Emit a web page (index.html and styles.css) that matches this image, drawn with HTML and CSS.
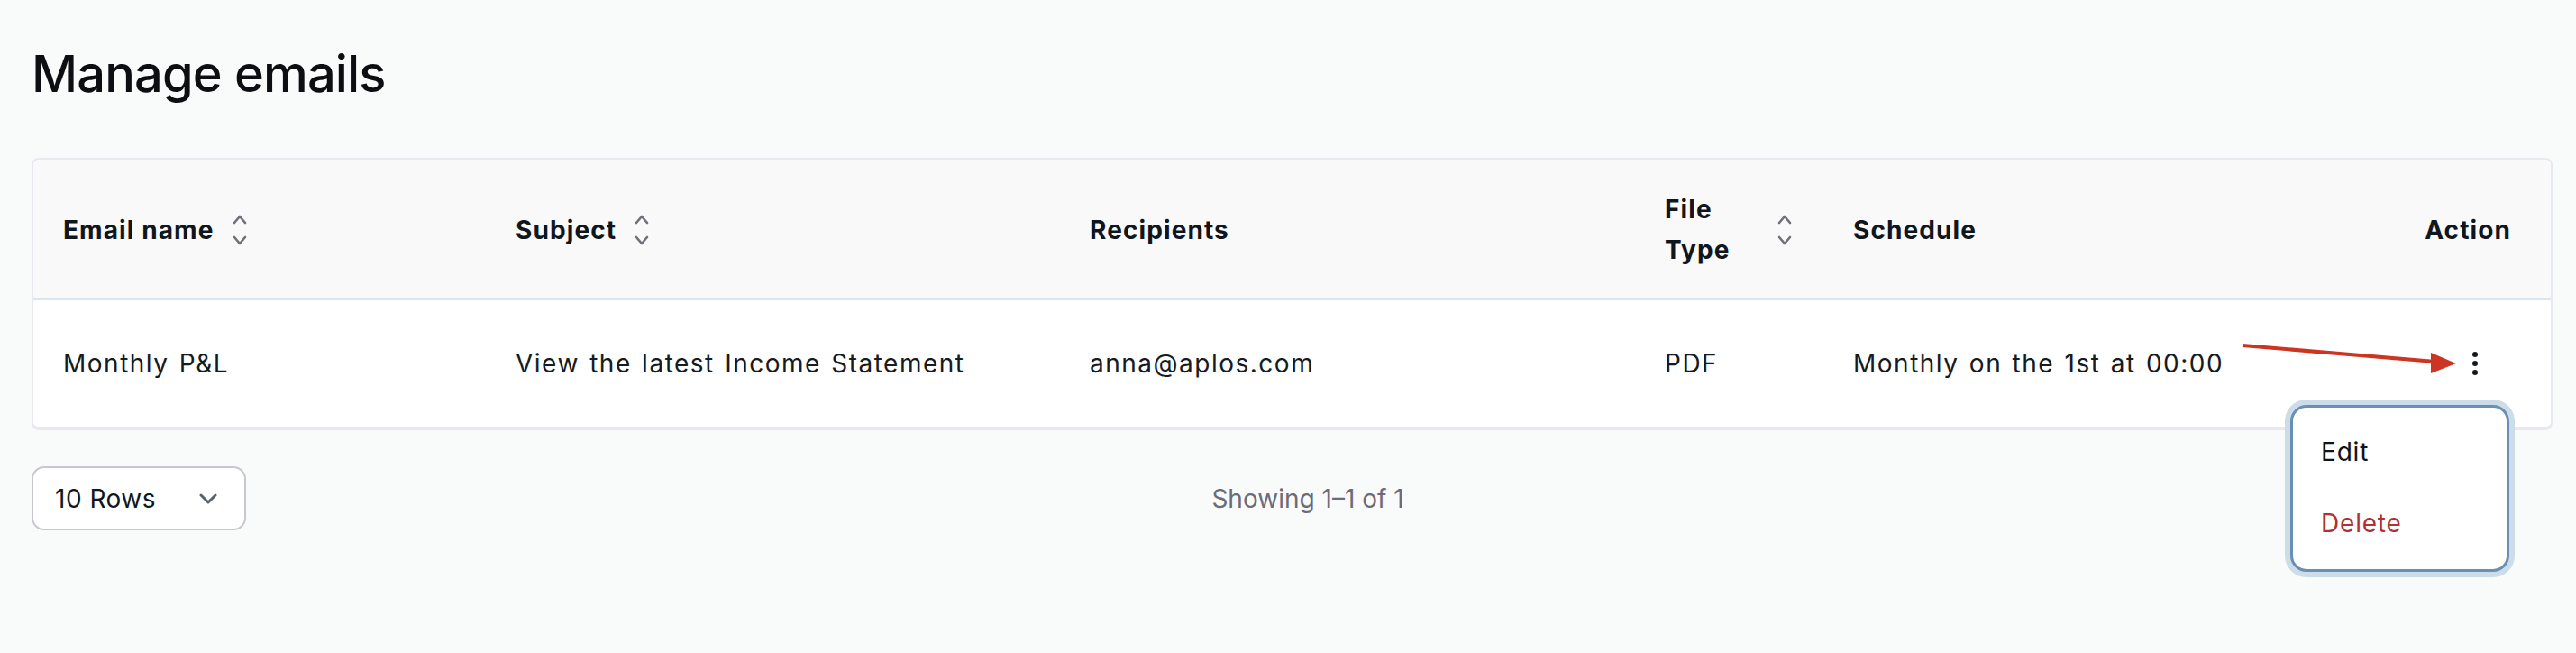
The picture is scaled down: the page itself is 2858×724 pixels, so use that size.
FILE: index.html
```html
<!DOCTYPE html>
<html lang="en">
<head>
<meta charset="utf-8">
<title>Manage emails</title>
<link rel="stylesheet" href="styles.css">
</head>
<body>
<div class="page">
  <h1 class="title">Manage emails</h1>

  <div class="card">
    <div class="grid">
      <div class="th"><span>Email name</span><svg class="sort" viewBox="0 0 16 36"><path d="M2 10 L8 3 L14 10"/><path d="M2 26 L8 33 L14 26"/></svg></div>
      <div class="th"><span>Subject</span><svg class="sort" viewBox="0 0 16 36"><path d="M2 10 L8 3 L14 10"/><path d="M2 26 L8 33 L14 26"/></svg></div>
      <div class="th"><span>Recipients</span></div>
      <div class="th"><span class="wrap">File Type</span><svg class="sort" viewBox="0 0 16 36"><path d="M2 10 L8 3 L14 10"/><path d="M2 26 L8 33 L14 26"/></svg></div>
      <div class="th"><span>Schedule</span></div>
      <div class="th th-action"><span>Action</span></div>

      <div class="td">Monthly P&amp;L</div>
      <div class="td">View the latest Income Statement</div>
      <div class="td">anna@aplos.com</div>
      <div class="td">PDF</div>
      <div class="td">Monthly on the 1st at 00:00</div>
      <div class="td td-action">
        <button class="kebab" aria-label="Actions">
          <svg viewBox="0 0 8 28"><circle cx="4" cy="4" r="3"/><circle cx="4" cy="14" r="3"/><circle cx="4" cy="24" r="3"/></svg>
        </button>
      </div>
    </div>
  </div>

  <div class="toolbar">
    <div class="select">
      <span>10 Rows</span>
      <svg class="chev" viewBox="0 0 20 12"><path d="M2 2 L10 10 L18 2"/></svg>
    </div>
    <div class="showing">Showing 1–1 of 1</div>
    <div class="spacer"></div>
  </div>

  <svg class="annot" viewBox="0 0 260 50" aria-hidden="true">
    <line x1="8" y1="8" x2="222" y2="26"/>
    <polygon points="245,28 217,16 217,39"/>
  </svg>

  <div class="menu">
    <div class="item">Edit</div>
    <div class="item danger">Delete</div>
  </div>
</div>
</body>
</html>
```

FILE: styles.css
```css
* { box-sizing: border-box; }
html, body { margin: 0; padding: 0; }
body {
  background: #f9fafa;
  font-family: Inter, "Open Sans", "Liberation Sans", sans-serif;
  color: #12181f;
  font-size: 28px;
}
.page {
  position: relative;
  padding: 46px 26px 0 35px;
  min-height: 724px;
}
.title {
  margin: 0;
  font-size: 56px;
  line-height: 72px;
  font-weight: 500;
  color: #0c0f12;
  letter-spacing: -0.85px;
}
.card {
  margin-top: 57px;
  border: 2px solid #e9e8ee;
  border-bottom-width: 4px;
  border-radius: 8px;
  background: #ffffff;
  overflow: hidden;
}
.grid {
  display: grid;
  grid-template-columns: 502px 637px 638px 209px 1fr 300px;
}
.th {
  height: 156px;
  background: #f9f9fa;
  border-bottom: 3px solid #dce6ef;
  display: flex;
  align-items: center;
  gap: 20px;
  padding-left: 33px;
  padding-top: 3px;
  font-weight: 700;
  line-height: 1.6;
  letter-spacing: 1.1px;
  color: #0f161d;
}
.th .wrap { width: 105px; }
.th-action { justify-content: flex-end; padding-right: 44px; }
.sort {
  width: 16px;
  height: 36px;
  fill: none;
  stroke: #70707a;
  stroke-width: 2.6;
  stroke-linecap: round;
  stroke-linejoin: round;
  flex: none;
}
.td {
  height: 140px;
  display: flex;
  align-items: center;
  padding-left: 33px;
  color: #161b21;
  white-space: nowrap;
  letter-spacing: 1.5px;
  word-spacing: 2px;
}
.td-action { justify-content: flex-end; padding-right: 44px; }
.kebab {
  border: 0;
  background: transparent;
  padding: 0;
  margin-right: 36px;
  width: 8px;
  height: 28px;
  display: flex;
}
.kebab svg { width: 8px; height: 28px; fill: #15191e; }
.toolbar {
  margin-top: 40px;
  display: flex;
  align-items: center;
  justify-content: space-between;
}
.select {
  width: 238px;
  height: 71px;
  background: #ffffff;
  border: 2px solid #c7c7cd;
  border-radius: 14px;
  display: flex;
  align-items: center;
  justify-content: space-between;
  padding: 0 30px 0 24px;
  color: #12171c;
  letter-spacing: 0.5px;
}
.chev {
  width: 20px;
  height: 12px;
  fill: none;
  stroke: #59626a;
  stroke-width: 3;
  stroke-linecap: round;
  stroke-linejoin: round;
}
.showing { color: #6c6b78; }
.spacer { width: 203px; height: 1px; }
.annot {
  position: absolute;
  left: 2480px;
  top: 375px;
  width: 260px;
  height: 50px;
}
.annot line { stroke: #cc3522; stroke-width: 4; }
.annot polygon { fill: #cc3522; }
.menu {
  position: absolute;
  left: 2541px;
  top: 449px;
  width: 243px;
  height: 185px;
  background: #ffffff;
  border: 3px solid #6990b4;
  border-radius: 18px;
  box-shadow: 0 0 0 6px #cddce9;
  padding: 9px 0 8px;
  font-family: Inter, "Open Sans", sans-serif;
  letter-spacing: 0.8px;
}
.item {
  height: 79px;
  display: flex;
  align-items: center;
  padding-left: 31px;
  color: #0f1419;
}
.item.danger { color: #b2302f; }
```
